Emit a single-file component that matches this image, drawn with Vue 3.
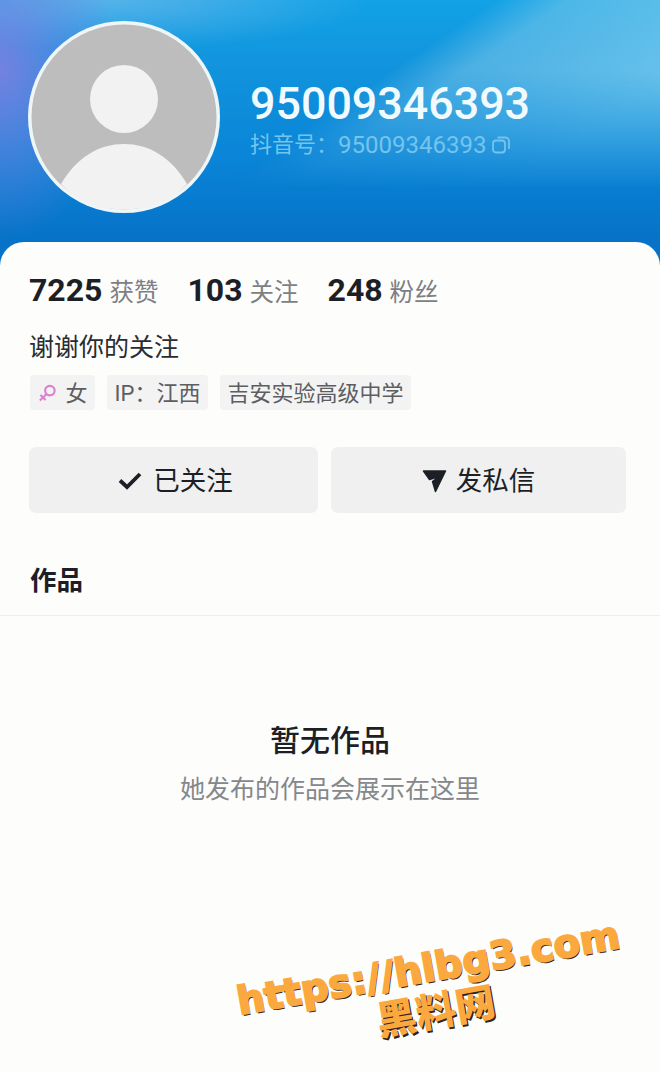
<template>
  <div class="page">
    <header class="hero">
      <div class="avatar">
        <svg viewBox="0 0 192 192" width="192" height="192">
          <circle cx="96" cy="96" r="96" fill="#eef6f8" />
          <circle cx="96" cy="96" r="92.5" fill="#bdbdbd" />
          <circle cx="96" cy="78" r="34" fill="#f2f2f2" />
          <path d="M33 163 C49 136 71 123 96 123 C121 123 143 136 159 163 C144 180 121 188.5 96 188.5 C71 188.5 48 180 33 163 Z" fill="#f2f2f2" />
        </svg>
      </div>
      <div class="identity">
        <div class="name">{{ perfil.id }}</div>
        <div class="account">
          <span>抖音号：</span><span class="account-num">{{ perfil.id }}</span>
          <svg class="copy" viewBox="0 0 20 20" width="20" height="20" fill="none" stroke="currentColor" stroke-width="1.8">
            <rect x="2" y="5.5" width="12" height="12" rx="3" />
            <path d="M6.5 2.5 H14.5 A3.5 3.5 0 0 1 18 6 V14" />
          </svg>
        </div>
      </div>
    </header>

    <main class="card">
      <div class="stats">
        <div v-for="s in stats" :key="s.label" class="stat">
          <b>{{ s.valor }}</b><span>{{ s.label }}</span>
        </div>
      </div>

      <p class="bio">谢谢你的关注</p>

      <div class="tags">
        <span class="tag">
          <svg viewBox="0 0 20 20" width="19" height="19" fill="none" stroke="#dd7fd0" stroke-width="2.2">
            <circle cx="12.5" cy="8" r="5" />
            <path d="M9 11.5 L2 18.5 M2.5 12.5 L8 18" />
          </svg>
          女
        </span>
        <span class="tag">IP：江西</span>
        <span class="tag">吉安实验高级中学</span>
      </div>

      <div class="actions">
        <button class="btn btn-follow">
          <svg viewBox="0 0 24 24" width="24" height="24" fill="none" stroke="#1c1f26" stroke-width="3.8">
            <path d="M2 12.5 L9 19 L22 6" />
          </svg>
          已关注
        </button>
        <button class="btn btn-msg">
          <svg viewBox="0 0 25 24" width="25" height="24" fill="#1c1f26" stroke="#1c1f26" stroke-width="1.5" stroke-linejoin="round">
            <path d="M1.5 2 H23.5 L13.5 22.5 L10.5 12.5 L17 7.5 L7.5 10.5 Z" />
          </svg>
          发私信
        </button>
      </div>

      <div class="tab">作品</div>

      <div class="empty">
        <h2>暂无作品</h2>
        <p>她发布的作品会展示在这里</p>
      </div>
    </main>

    <div class="stamp">
      <div class="stamp-url">https://hlbg3.com</div>
      <div class="stamp-name">黑料网</div>
    </div>
  </div>
</template>

<script setup>
const perfil = { id: '95009346393' }

const stats = [
  { valor: '7225', label: '获赞' },
  { valor: '103', label: '关注' },
  { valor: '248', label: '粉丝' }
]
</script>

<style>
body {
  background: #fdfdfc;
}
</style>

<style scoped>
.page {
  position: relative;
  width: 660px;
  height: 1072px;
  overflow: hidden;
  background: #fdfdfc;
  font-family: Roboto, "Noto Sans CJK SC", sans-serif;
  color: #1c1f26;
}
.hero {
  position: relative;
  display: flex;
  align-items: flex-start;
  height: 265px;
  padding: 21px 0 0 28px;
  box-sizing: border-box;
  background:
    radial-gradient(ellipse 120px 170px at 0 70px, rgba(140, 125, 225, 0.8), rgba(120, 130, 225, 0) 100%),
    radial-gradient(ellipse 260px 50px at 110px 0, rgba(130, 190, 235, 0.6), rgba(130, 190, 235, 0) 100%),
    linear-gradient(180deg, #12a2e6 0, #1193dc 70px, #0a86d8 150px, #0672c8 240px);
}
/* faixa clara na diagonal do fundo */
.hero::before {
  content: "";
  position: absolute;
  inset: 0;
  background: linear-gradient(146deg, rgba(135, 205, 235, 0) 47%, rgba(135, 205, 235, 0.5) 54%, rgba(135, 210, 240, 0.75) 75%);
  -webkit-mask-image: linear-gradient(180deg, #000 0, #000 70px, transparent 190px);
  mask-image: linear-gradient(180deg, #000 0, #000 70px, transparent 190px);
}
.avatar {
  position: relative;
  width: 192px;
  height: 192px;
  flex: none;
}
.avatar svg {
  display: block;
}
.identity {
  position: relative;
  margin: 60px 0 0 30px;
}
.name {
  font-size: 44.8px;
  line-height: 46px;
  font-weight: 500;
  color: #f1fbfd;
}
.account {
  display: flex;
  align-items: center;
  margin-top: 3px;
  font-size: 22px;
  line-height: 30px;
  color: #75c4ec;
}
.account-num {
  font-size: 24px;
}
.copy {
  margin-left: 5px;
}
.card {
  position: relative;
  margin-top: -23px;
  height: 830px;
  padding-top: 30px;
  box-sizing: border-box;
  background: #fdfdfc;
  border-radius: 24px 24px 0 0;
}
.stats {
  display: flex;
  gap: 29px;
  padding-left: 29px;
  height: 36px;
  align-items: center;
}
.stat {
  display: flex;
  align-items: center;
  gap: 7px;
}
.stat b {
  font-size: 32px;
  font-weight: 700;
}
.stat span {
  font-size: 24.5px;
  color: #7d7f84;
}
.bio {
  margin: 22px 0 0 29px;
  font-size: 25px;
  line-height: 36px;
  color: #2a2c30;
}
.tags {
  display: flex;
  gap: 12px;
  margin: 9px 0 0 30px;
}
.tag {
  display: flex;
  align-items: center;
  gap: 9px;
  height: 35px;
  box-sizing: border-box;
  padding: 0 7.5px 3px;
  border-radius: 4px;
  background: #f3f3f3;
  font-size: 22px;
  color: #5c5e62;
}
.tag svg {
  margin-bottom: -3px;
}
.actions {
  display: flex;
  gap: 13px;
  margin: 37px 34px 0 29px;
}
.btn {
  display: flex;
  align-items: center;
  justify-content: center;
  gap: 11px;
  height: 66px;
  padding: 0 0 4px;
  border: none;
  border-radius: 7px;
  background: #f0f0f0;
  font-family: inherit;
  font-size: 26.5px;
  color: #1c1f26;
}
.btn svg {
  margin-bottom: -4px;
}
.btn-follow {
  width: 289px;
  padding-left: 4px;
}
.btn-msg {
  flex: 1;
  gap: 9px;
}
.btn-msg svg {
  margin-bottom: -6px;
}
.tab {
  height: 103px;
  box-sizing: border-box;
  padding: 49px 0 0 30px;
  font-size: 26.5px;
  line-height: 38px;
  font-weight: 700;
  border-bottom: 1px solid #eeeeee;
}
.empty {
  padding-top: 103px;
  text-align: center;
}
.empty h2 {
  margin: 0;
  font-size: 30px;
  line-height: 44px;
  font-weight: 500;
}
.empty p {
  margin: 9px 0 0;
  font-size: 25px;
  line-height: 36px;
  color: #85878b;
}
/* marca por cima do conteudo */
.stamp {
  position: absolute;
  left: 222px;
  top: 946px;
  width: 420px;
  text-align: center;
  transform: rotate(-10deg);
  color: #fba93f;
  font-weight: 700;
  text-shadow: 1px 2px 0 #2b2420;
}
.stamp-url {
  font-family: "DejaVu Sans", sans-serif;
  font-size: 38.5px;
  line-height: 44px;
  white-space: nowrap;
  letter-spacing: 0.2px;
  -webkit-text-stroke: 2px #fba93f;
}
.stamp-name {
  font-family: "Noto Sans CJK SC", sans-serif;
  font-size: 40px;
  line-height: 46px;
  margin-top: -4px;
  font-weight: 900;
}
</style>
